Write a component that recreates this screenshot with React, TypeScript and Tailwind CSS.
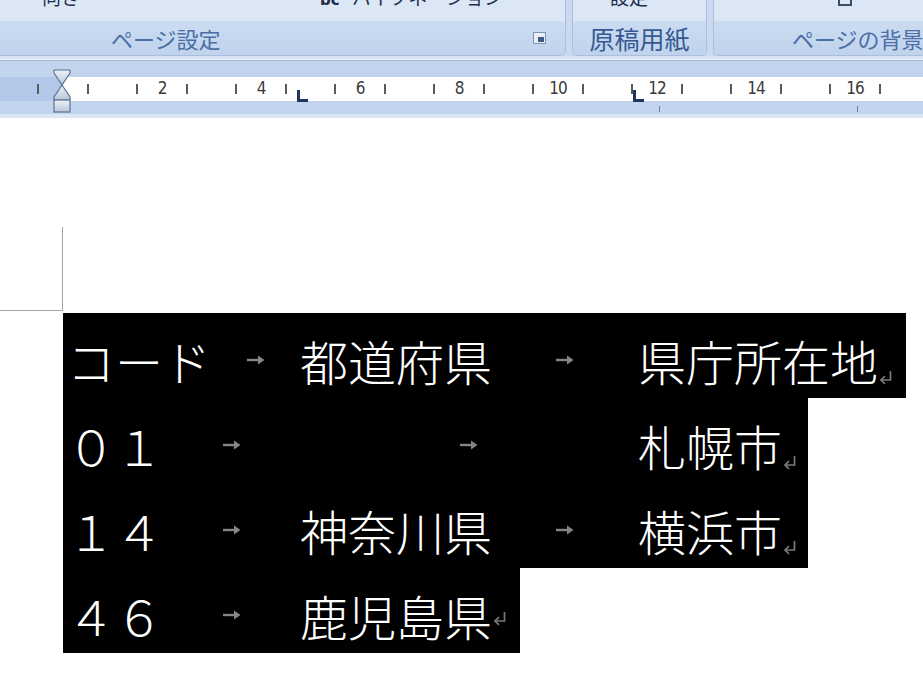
import React from "react";

const UNIT = 49.5;
const ORIGIN = 63;

const ROWS = [
  { width: 843, code: "コード", pref: "都道府県", city: "県庁所在地" },
  { width: 745, code: "０１", pref: "", city: "札幌市" },
  { width: 745, code: "１４", pref: "神奈川県", city: "横浜市" },
  { width: 457, code: "４６", pref: "鹿児島県", city: null },
];

function TabArrow() {
  return (
    <svg width="20" height="12" viewBox="0 0 20 12" className="shrink-0">
      <path d="M1 6 H13" stroke="#858585" strokeWidth="2.4" />
      <path d="M12 1.5 L18.5 6 L12 10.5 Z" fill="#858585" />
    </svg>
  );
}

function ReturnMark() {
  return (
    <svg width="15" height="15" viewBox="0 0 15 15" className="shrink-0 self-end mb-[13px]">
      <path d="M12.5 1 V10 H3.5" stroke="#7a7a7a" strokeWidth="1.7" fill="none" />
      <path d="M7 6.2 L3 10 L7 13.8" stroke="#7a7a7a" strokeWidth="1.7" fill="none" />
    </svg>
  );
}

function Cell({ text, width }: { text: string; width: number }) {
  return (
    <div className="flex items-center shrink-0" style={{ width }}>
      <span>{text}</span>
      <div className="flex flex-1 justify-center">
        <TabArrow />
      </div>
    </div>
  );
}

function Ruler() {
  const ticks = [];
  for (let k = -1; k < 18; k++) ticks.push(ORIGIN + (k + 0.5) * UNIT);
  const nums = [2, 4, 6, 8, 10, 12, 14, 16];
  return (
    <div className="relative h-[62px] bg-[#c3d5ee]">
      <div className="h-[3px] bg-[#d6e3f3]" />
      <div className="h-[1px] bg-[#f2f6fb]" />
      <div className="h-[1px] bg-[#9db5d8]" />
      {/* strip */}
      <div className="absolute left-0 right-0 top-[21px] h-[24px] flex">
        <div className="w-[63px] bg-[#b3c8e8]" />
        <div className="flex-1 bg-white" />
      </div>
      <div className="absolute left-0 right-0 bottom-0 h-[4px] bg-[#dde7f4]" />
      {ticks.map((x) => (
        <div key={x} className="absolute top-[28px] h-[10px] w-[2px] bg-[#5b5b5b]" style={{ left: x - 1 }} />
      ))}
      {nums.map((n) => (
        <span
          key={n}
          className="absolute top-[23px] -translate-x-1/2 text-[17px] leading-[18px] tracking-[-1px] text-[#3a3a3a] font-['DejaVu_Sans_Condensed','DejaVu_Sans',sans-serif]"
          style={{ left: ORIGIN + n * UNIT }}
        >
          {n}
        </span>
      ))}
      {[12, 16].map((n) => (
        <div key={n} className="absolute top-[50px] h-[6px] w-[1px] bg-[#6a7f9e]" style={{ left: ORIGIN + n * UNIT + 2 }} />
      ))}
      {/* tab stops */}
      {[297, 633].map((x) => (
        <svg key={x} width="12" height="12" viewBox="0 0 12 12" className="absolute top-[34px]" style={{ left: x }}>
          <path d="M1.5 0 V10.5 H11" stroke="#1f3658" strokeWidth="3" fill="none" />
        </svg>
      ))}
      {/* indent marker */}
      <svg width="20" height="44" viewBox="0 0 20 44" className="absolute left-[52px] top-[13px]">
        <defs>
          <linearGradient id="ig" x1="0" y1="0" x2="0" y2="1">
            <stop offset="0" stopColor="#eef2f7" />
            <stop offset="1" stopColor="#b9c6d8" />
          </linearGradient>
        </defs>
        <path d="M2 1 H18 V4 L10 16 L2 4 Z" fill="url(#ig)" stroke="#5a7395" strokeWidth="1.2" />
        <path d="M10 16 L18 28 V31 H2 V28 Z" fill="url(#ig)" stroke="#5a7395" strokeWidth="1.2" />
        <rect x="2" y="31" width="16" height="12" fill="url(#ig)" stroke="#5a7395" strokeWidth="1.2" />
      </svg>
    </div>
  );
}

function Clipped({ children, className }: { children: React.ReactNode; className: string }) {
  return (
    <div className={"absolute top-0 h-[8px] overflow-hidden " + className}>
      <div className="-mt-[13px] text-[19px] leading-[20px] text-[#1d2f4d] whitespace-nowrap">{children}</div>
    </div>
  );
}

function Ribbon() {
  return (
    <div className="relative h-[56px] bg-[#c9daf0] flex gap-[6px] font-['Noto_Sans_CJK_JP',sans-serif]">
      <div className="relative -ml-[4px] w-[570px] shrink-0 flex flex-col rounded-b-[5px] border border-t-0 border-[#a9bfdd] overflow-hidden">
        <div className="h-[21px] bg-[#dce7f5]" />
        <div className="flex-1 bg-gradient-to-b from-[#cbdcf1] to-[#c0d3ec] flex items-center">
          <span className="ml-[114px] text-[22px] leading-none text-[#4a6ea6]">ページ設定</span>
          <div className="ml-auto mr-[19px] w-[13px] h-[12px] border border-[#7f95b5] bg-[#e9eef5] relative">
            <div className="absolute right-[1px] bottom-[1px] w-[6px] h-[5px] bg-[#3f5a82]" />
          </div>
        </div>
      </div>
      <div className="w-[135px] shrink-0 flex flex-col rounded-b-[5px] border border-t-0 border-[#a9bfdd] overflow-hidden">
        <div className="h-[21px] bg-[#dce7f5]" />
        <div className="flex-1 bg-gradient-to-b from-[#cbdcf1] to-[#c0d3ec] flex items-center justify-center">
          <span className="text-[25px] leading-none text-[#355a93]">原稿用紙</span>
        </div>
      </div>
      <div className="flex-1 flex flex-col rounded-bl-[5px] border border-t-0 border-r-0 border-[#a9bfdd] overflow-hidden">
        <div className="h-[21px] bg-[#dce7f5]" />
        <div className="flex-1 bg-gradient-to-b from-[#cbdcf1] to-[#c0d3ec] flex items-center">
          <span className="ml-[78px] text-[22px] leading-none text-[#4a6ea6] whitespace-nowrap">ページの背景</span>
        </div>
      </div>
      <Clipped className="left-[42px]">向き</Clipped>
      <Clipped className="left-[320px]">
        <span className="font-['DejaVu_Sans',sans-serif] text-[15px] font-bold mr-[12px]">bc</span>ハイフネーション
      </Clipped>
      <Clipped className="left-[610px]">設定</Clipped>
      <div className="absolute top-0 left-[838px] w-[14px] h-[6px] border-x-2 border-b-2 border-[#3a4c66]" />
    </div>
  );
}

export default function App() {
  return (
    <div className="w-[923px] h-[697px] overflow-hidden bg-white flex flex-col">
      <Ribbon />
      <Ruler />
      <div className="flex flex-col font-['Noto_Sans_CJK_JP',sans-serif]">
        <div className="w-[63px] h-[84px] mt-[109px] border-r border-b border-[#a3a3a3]" />
        <div className="mt-[2px] ml-[63px] flex flex-col">
          {ROWS.map((r, i) => (
            <div
              key={i}
              className="h-[85px] bg-black flex items-center pl-[4px] pt-[8px] text-[48px] leading-none font-[200] text-white"
              style={{ width: r.width }}
            >
              <Cell text={r.code} width={233} />
              {r.city === null ? (
                <div className="flex items-center">
                  <span>{r.pref}</span>
                  <ReturnMark />
                </div>
              ) : (
                <>
                  <Cell text={r.pref} width={338} />
                  <span>{r.city}</span>
                  <ReturnMark />
                </>
              )}
            </div>
          ))}
        </div>
      </div>
    </div>
  );
}
